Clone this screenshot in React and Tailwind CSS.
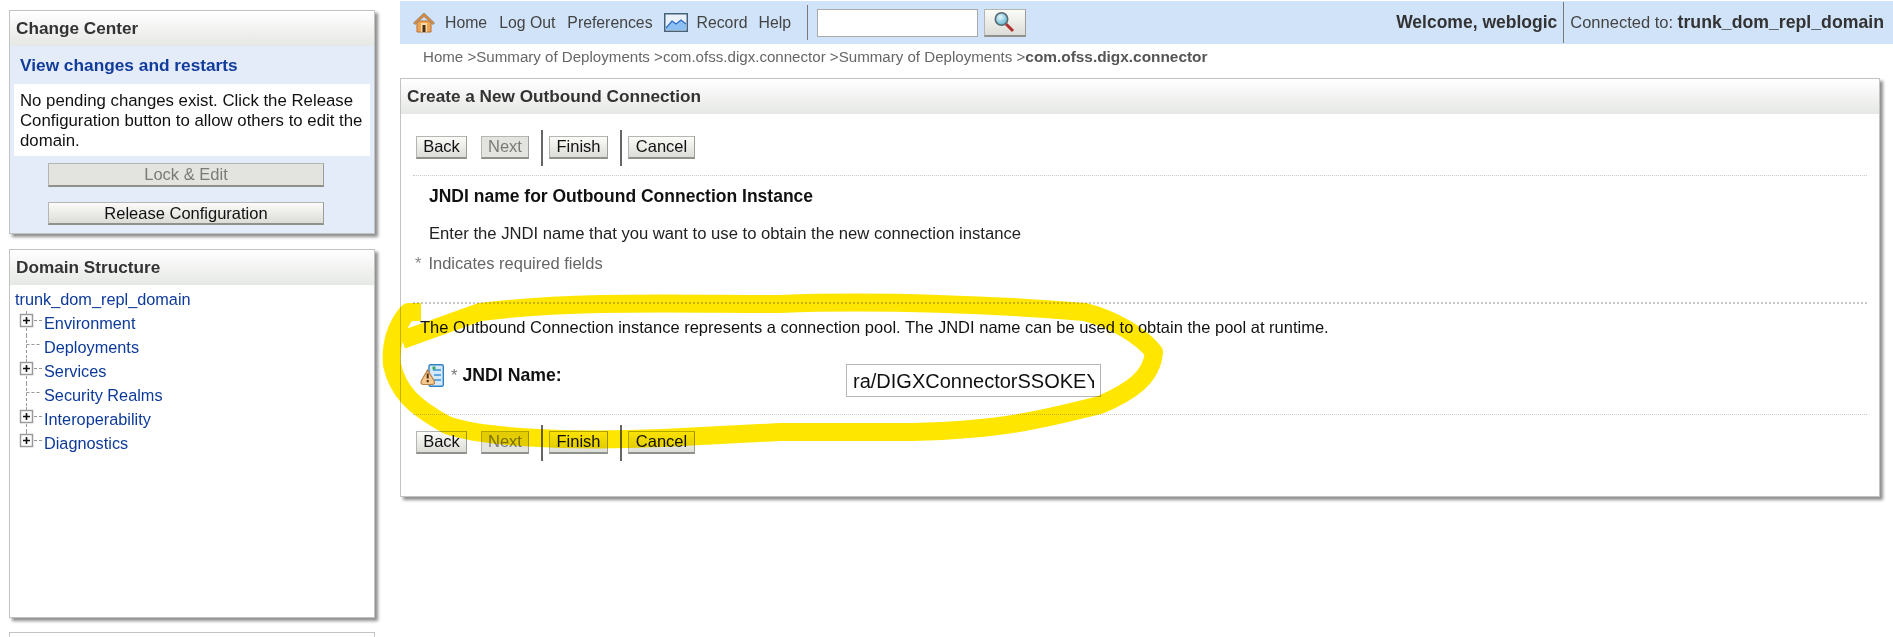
const font = { fontFamily: '"Liberation Sans", Arial, sans-serif' };

function Btn({ children, disabled, className = "" }) {
  return (
    <div
      className={`flex shrink-0 items-center justify-center border border-[#b4b6b0] border-b-2 border-b-[#8f918c] border-r-[#9c9e99] text-[16.5px] leading-none ${
        disabled
          ? "bg-[#e3e4df] text-[#7a7a76]"
          : "bg-gradient-to-b from-[#fbfbf9] to-[#dcddd7] text-[#111]"
      } ${className}`}
    >
      {children}
    </div>
  );
}

function Panel({ title, className = "", children }) {
  return (
    <section className={`shrink-0 border border-[#c2c4c2] bg-white shadow-[3px_3px_3px_#8f8f8f] ${className}`}>
      <div className="flex h-[35px] items-center bg-gradient-to-b from-white to-[#e6e8e5] pl-[6px] text-[17.2px] font-bold text-[#333]">
        {title}
      </div>
      {children}
    </section>
  );
}

function Expander({ last }) {
  return (
    <svg width="29" height="24" viewBox="0 0 29 24" className="shrink-0">
      <path d={last ? "M11.5 0v4" : "M11.5 0v4M11.5 17v7"} stroke="#999" strokeWidth="1" strokeDasharray="3 2" />
      <rect x="5.5" y="3.5" width="12" height="12" fill="#fff" stroke="#9a9a9a" strokeWidth="1.5" />
      <path d="M8 9.5h7M11.5 6v7" stroke="#111" strokeWidth="1.6" />
      <path d="M19 9.5h8" stroke="#999" strokeWidth="1" strokeDasharray="3 2" />
    </svg>
  );
}

function Leaf() {
  return (
    <svg width="29" height="24" viewBox="0 0 29 24" className="shrink-0">
      <path d="M11.5 0v24M11.5 9.5h15" fill="none" stroke="#999" strokeWidth="1" strokeDasharray="3 2" />
    </svg>
  );
}

const tree = [
  ["Environment", true],
  ["Deployments", false],
  ["Services", true],
  ["Security Realms", false],
  ["Interoperability", true],
  ["Diagnostics", true],
];

function ButtonRow() {
  return (
    <div className="flex items-center">
      <Btn className="mb-[2px] ml-[15px] h-[23px] w-[51px]">Back</Btn>
      <Btn disabled className="mb-[2px] ml-[14px] h-[23px] w-[48px]">Next</Btn>
      <div className="ml-[12px] h-[36px] w-[2px] bg-[#666]" />
      <Btn className="mb-[2px] ml-[6px] h-[23px] w-[59px]">Finish</Btn>
      <div className="ml-[12px] h-[36px] w-[2px] bg-[#666]" />
      <Btn className="mb-[2px] ml-[6px] h-[23px] w-[67px]">Cancel</Btn>
    </div>
  );
}

function HomeIcon() {
  return (
    <svg width="22" height="21" viewBox="0 0 22 21" className="shrink-0">
      <path d="M4 9h14v11H4z" fill="#f0a550" stroke="#b8702e" />
      <path d="M0.5 11 11 1l10.5 10-1.5 1.5L11 4.5 2 12.5z" fill="#e8862e" stroke="#8f8f88" />
      <rect x="8" y="11" width="6" height="9" fill="#f6d9a8" />
      <rect x="9.5" y="13" width="3" height="7" fill="#4a3018" />
    </svg>
  );
}

function RecordIcon() {
  return (
    <svg width="24" height="19" viewBox="0 0 24 19" className="shrink-0">
      <rect x="0.75" y="0.75" width="22.5" height="17.5" fill="#eaf1fb" stroke="#46627a" strokeWidth="1.5" />
      <path d="M2 15 8 8l4 3 5-4 5 4v6H2z" fill="#8cc0f2" />
      <path d="M2 15 8 8l4 3 5-4 5 4" fill="none" stroke="#2a6ac8" strokeWidth="1.2" />
    </svg>
  );
}

function WarnIcon() {
  return (
    <svg width="24" height="23" viewBox="0 0 24 23" className="shrink-0">
      <rect x="9" y="0.7" width="14.3" height="21.6" rx="1.5" fill="#d6e9f8" stroke="#2f80c4" strokeWidth="1.4" />
      <path d="M13 6h8M14 11h7M14 16h7" stroke="#62a8e0" strokeWidth="2.2" />
      <rect x="12.5" y="2.5" width="3" height="3" fill="#3aa860" />
      <path d="M7.5 6 1.5 16.5Q0 20 3 20.5h9.5q3-.5 1.5-4z" fill="#f4c88e" stroke="#b98244" strokeWidth="1.2" />
      <path d="M7.7 9.5v5M7.7 16v2.2" stroke="#4a2e10" strokeWidth="2" />
    </svg>
  );
}

function SearchIcon() {
  return (
    <svg width="22" height="22" viewBox="0 0 22 22" className="mr-[1px]">
      <defs>
        <radialGradient id="glass" cx="0.4" cy="0.35" r="0.7">
          <stop offset="0" stopColor="#e6f6fb" />
          <stop offset="1" stopColor="#58b4cf" />
        </radialGradient>
      </defs>
      <path d="m13 13 7 7" stroke="#b03030" strokeWidth="3" />
      <circle cx="8.5" cy="8" r="6.2" fill="url(#glass)" stroke="#5a6a72" strokeWidth="1.6" />
    </svg>
  );
}

function Line({ className = "", children }) {
  return <div className={`h-[20px] leading-[20px] whitespace-nowrap ${className}`}>{children}</div>;
}

export default function App() {
  return (
    <div style={font} className="relative flex h-[637px] w-[1893px] overflow-hidden bg-white text-[16.5px]">
      <aside className="ml-[9px] mt-[10px] flex w-[366px] shrink-0 flex-col">
        <Panel title="Change Center" className="h-[224px] !bg-[#e4ecfa]">
          <div className="flex h-[38px] items-center pl-[10px] pt-[2px] text-[17.3px] font-bold text-[#123c9c]">
            View changes and restarts
          </div>
          <div className="mx-[4px] h-[72px] bg-white pl-[6px] pt-[7px] text-[16.8px] leading-[20px] text-[#111]">
            No pending changes exist. Click the Release Configuration button to allow others to edit the domain.
          </div>
          <Btn disabled className="ml-[38px] mt-[7px] h-[24px] w-[276px]">Lock &amp; Edit</Btn>
          <Btn className="ml-[38px] mt-[15px] h-[23px] w-[276px]">Release Configuration</Btn>
        </Panel>
        <Panel title="Domain Structure" className="mt-[15px] h-[369px]">
          <div className="pl-[5px] pt-[2px] text-[16.3px] leading-[24px] text-[#0d3a9a]">
            <div>trunk_dom_repl_domain</div>
            {tree.map(([label, open], i) => (
              <div key={label} className="flex h-[24px] items-center">
                {open ? <Expander last={i === tree.length - 1} /> : <Leaf />}
                <span>{label}</span>
              </div>
            ))}
          </div>
        </Panel>
        <div className="mt-[14px] h-[10px] shrink-0 border border-[#c2c4c2]" />
      </aside>

      <main className="ml-[25px] flex min-w-0 flex-1 flex-col">
        <header className="mt-[1px] flex h-[43px] items-center bg-[#d1e3f8] text-[#444]">
          <div className="ml-[13px] flex items-center text-[15.8px]">
            <HomeIcon />
            <span className="ml-[10px]">Home</span>
            <span className="ml-[12px]">Log Out</span>
            <span className="ml-[12px]">Preferences</span>
            <div className="ml-[11px]"><RecordIcon /></div>
            <span className="ml-[9px]">Record</span>
            <span className="ml-[11px]">Help</span>
            <div className="ml-[16px] h-[35px] w-[1px] bg-[#777]" />
            <div className="ml-[9px] h-[28px] w-[161px] border border-[#aaa] bg-white" />
            <Btn className="ml-[6px] h-[28px] w-[42px]"><SearchIcon /></Btn>
          </div>
          <div className="ml-auto flex items-center pr-[9px]">
            <b className="text-[17.5px] text-[#333]">Welcome, weblogic</b>
            <div className="ml-[6px] mr-[6px] h-[41px] w-[1px] bg-[#777]" />
            <span>Connected to:&nbsp;</span>
            <b className="text-[17.7px] text-[#333]">trunk_dom_repl_domain</b>
          </div>
        </header>
        <nav className="ml-[23px] flex h-[26px] items-center text-[#666]">
          <span className="text-[15.1px]">Home &gt;Summary of Deployments &gt;com.ofss.digx.connector &gt;Summary of Deployments &gt;</span>
          <b className="text-[15.4px] text-[#555]">com.ofss.digx.connector</b>
        </nav>
        <Panel title="Create a New Outbound Connection" className="mr-[13px] mt-[8px] h-[419px]">
          <div className="pt-[16px]"><ButtonRow /></div>
          <div className="mx-[12px] mt-[9px] border-t border-dotted border-[#c9c9c9]" />
          <Line className="ml-[28px] mt-[10px] text-[17.5px] font-bold text-[#111]">JNDI name for Outbound Connection Instance</Line>
          <Line className="ml-[28px] mt-[18px] text-[16.65px] text-[#222]">Enter the JNDI name that you want to use to obtain the new connection instance</Line>
          <Line className="ml-[14px] mt-[9px] text-[#666]"><span className="mr-[7px] text-[#888]">*</span>Indicates required fields</Line>
          <div className="mx-[12px] mt-[29px] border-t-2 border-dotted border-[#c9c9c9]" />
          <Line className="ml-[19px] mt-[13px] text-[#111]">The Outbound Connection instance represents a connection pool. The JNDI name can be used to obtain the pool at runtime.</Line>
          <div className="ml-[19px] mt-[27px] flex h-[33px]">
            <div className="flex w-[426px] items-start">
              <WarnIcon />
              <span className="ml-[7px] mt-[1px] h-[20px] leading-[20px] text-[#777]">*</span>
              <b className="ml-[5px] mt-[1px] h-[20px] text-[17.7px] leading-[20px] text-[#111]">JNDI Name:</b>
            </div>
            <input
              readOnly
              value="ra/DIGXConnectorSSOKEY"
              className="h-[33px] w-[255px] border border-[#b5b5b5] bg-white px-[6px] pt-[2px] text-[20px] text-[#111] outline-none"
            />
          </div>
          <div className="mx-[12px] mt-[17px] border-t border-dotted border-[#c9c9c9]" />
          <div className="pt-[10px]"><ButtonRow /></div>
        </Panel>
      </main>

      <svg className="pointer-events-none absolute left-0 top-0 mix-blend-multiply" width="1893" height="637" viewBox="0 0 1893 637">
        <path
          d="M421 312 L408 312 C396 325 390 345 392 365 C398 392 414 407 447 425 C480 437 560 442 663 438 L780 432 L913 432 C1000 430 1040 420 1100 405 C1130 392 1152 378 1154 352 C1140 335 1115 320 1085 312 C1000 305 880 300 780 304 C680 304 580 300 480 312 L402 340"
          fill="none"
          stroke="#ffe600"
          strokeWidth="18"
          strokeLinejoin="round"
        />
      </svg>
    </div>
  );
}
